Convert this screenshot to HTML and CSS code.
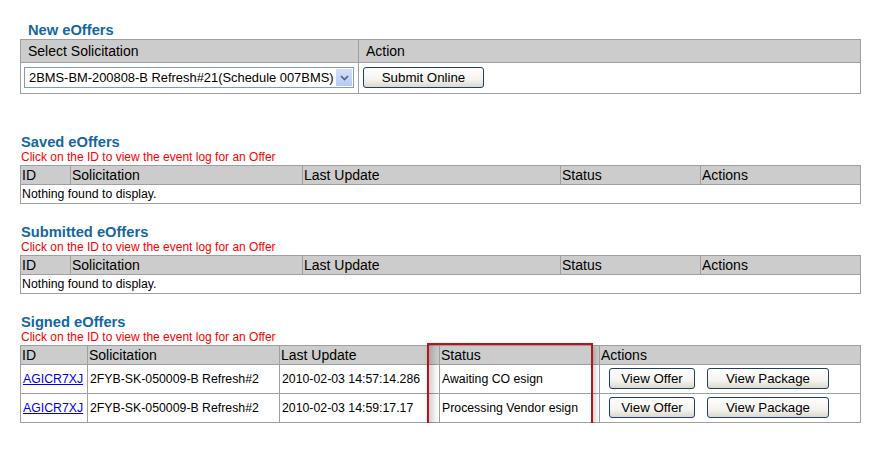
FILE: index.html
```html
<!DOCTYPE html>
<html>
<head>
<meta charset="utf-8">
<title>eOffers</title>
<link rel="stylesheet" href="styles.css">
</head>
<body>
<div class="page">
  <section class="block block-new">
    <h2 class="title title-new">New eOffers</h2>
    <table class="grid grid-new">
      <colgroup><col class="c-sel"><col></colgroup>
      <tr class="head"><th>Select Solicitation</th><th class="th-action">Action</th></tr>
      <tr class="row-new">
        <td class="td-select">
          <div class="select">
            <span class="select-text">2BMS-BM-200808-B Refresh#21(Schedule 007BMS)</span>
            <span class="select-arrow"><svg width="9" height="6" viewBox="0 0 9 6"><path d="M1 1 L4.5 4.5 L8 1" fill="none" stroke="#4d6185" stroke-width="1.6"/></svg></span>
          </div>
        </td>
        <td class="td-submit"><button class="btn btn-submit">Submit Online</button></td>
      </tr>
    </table>
  </section>

  <section class="block block-saved">
    <h2 class="title">Saved eOffers</h2>
    <p class="note">Click on the ID to view the event log for an Offer</p>
    <table class="grid grid-std">
      <colgroup><col class="s-id"><col class="s-sol"><col class="s-upd"><col class="s-st"><col></colgroup>
      <tr class="head"><th>ID</th><th>Solicitation</th><th>Last Update</th><th>Status</th><th>Actions</th></tr>
      <tr class="row-empty"><td colspan="5">Nothing found to display.</td></tr>
    </table>
  </section>

  <section class="block block-submitted">
    <h2 class="title">Submitted eOffers</h2>
    <p class="note">Click on the ID to view the event log for an Offer</p>
    <table class="grid grid-std">
      <colgroup><col class="s-id"><col class="s-sol"><col class="s-upd"><col class="s-st"><col></colgroup>
      <tr class="head"><th>ID</th><th>Solicitation</th><th>Last Update</th><th>Status</th><th>Actions</th></tr>
      <tr class="row-empty"><td colspan="5">Nothing found to display.</td></tr>
    </table>
  </section>

  <section class="block block-signed">
    <h2 class="title">Signed eOffers</h2>
    <p class="note">Click on the ID to view the event log for an Offer</p>
    <table class="grid grid-signed">
      <colgroup><col class="g-id"><col class="g-sol"><col class="g-upd"><col class="g-st"><col></colgroup>
      <tr class="head"><th>ID</th><th>Solicitation</th><th>Last Update</th><th>Status</th><th>Actions</th></tr>
      <tr class="row-data">
        <td><a href="#" class="link">AGICR7XJ</a></td>
        <td>2FYB-SK-050009-B Refresh#2</td>
        <td>2010-02-03 14:57:14.286</td>
        <td>Awaiting CO esign</td>
        <td class="td-actions"><button class="btn btn-offer">View Offer</button><button class="btn btn-package">View Package</button></td>
      </tr>
      <tr class="row-data">
        <td><a href="#" class="link">AGICR7XJ</a></td>
        <td>2FYB-SK-050009-B Refresh#2</td>
        <td>2010-02-03 14:59:17.17</td>
        <td>Processing Vendor esign</td>
        <td class="td-actions"><button class="btn btn-offer">View Offer</button><button class="btn btn-package">View Package</button></td>
      </tr>
    </table>
    <div class="highlight"></div>
  </section>
</div>
</body>
</html>
```

FILE: styles.css
```css
body {
  margin: 0;
  background: #ffffff;
  color: #000000;
  font-family: "Liberation Sans", Arial, sans-serif;
}

.page {
  padding: 22px 0 0 20px;
  width: 841px;
}

.block {
  position: relative;
}

.block-saved {
  margin-top: 40px;
}

.block-submitted,
.block-signed {
  margin-top: 20px;
}

.title {
  margin: 0;
  padding-left: 1px;
  font-size: 14.7px;
  line-height: 16px;
  font-weight: bold;
  color: #1467a0;
}

.title-new {
  padding-left: 8px;
  margin-bottom: 1px;
}

.note {
  margin: 0 0 1px 0;
  padding-left: 1px;
  font-size: 12px;
  line-height: 14px;
  color: #ff0000;
}

.grid {
  width: 841px;
  border-collapse: collapse;
  table-layout: fixed;
  border: 1px solid #a0a0a0;
}

.grid th,
.grid td {
  border: 1px solid #a0a0a0;
  text-align: left;
  white-space: nowrap;
  overflow: hidden;
}

.grid th {
  background: #cccccc;
  font-weight: normal;
  font-size: 14px;
  line-height: 16px;
  padding: 1px 1px;
}

.grid td {
  font-size: 12.3px;
  line-height: 16px;
  padding: 1px 1px;
  vertical-align: middle;
}

/* New eOffers table */
.c-sel { width: 338px; }

.grid-new th {
  padding: 3px 7px;
}

.td-select {
  padding: 4px 3px 5px 3px !important;
}

.td-submit {
  padding: 4px 4px 5px 4px !important;
}

.select {
  width: 330px;
  height: 21px;
  box-sizing: border-box;
  border: 1px solid #7f9db9;
  background: #fff;
  display: flex;
  align-items: center;
  justify-content: space-between;
}

.select-text {
  font-size: 12.9px;
  padding-left: 4px;
  line-height: 17px;
}

.select-arrow {
  width: 16px;
  height: 17px;
  margin-right: 1px;
  background: linear-gradient(#d3e0fd, #b6c9f6);
  display: flex;
  align-items: center;
  justify-content: center;
}

/* Buttons */
.btn {
  height: 21px;
  box-sizing: border-box;
  border: 1px solid #1f3e6e;
  border-radius: 3px;
  background: linear-gradient(#ffffff 0%, #f4f3ee 60%, #dcd9cd 100%);
  font-family: "Liberation Sans", Arial, sans-serif;
  font-size: 13.3px;
  line-height: 17px;
  color: #000;
  padding: 0;
  vertical-align: middle;
}

.btn-submit { width: 121px; }
.btn-offer { width: 86px; }
.btn-package { width: 122px; margin-left: 12px; }

/* Saved / Submitted */
.s-id { width: 50px; }
.s-sol { width: 232px; }
.s-upd { width: 258px; }
.s-st { width: 140px; }

/* Signed */
.g-id { width: 67px; }
.g-sol { width: 192px; }
.g-upd { width: 160px; }
.g-st { width: 160px; }

.row-data td {
  padding: 3px 1px 4px 2px;
}

.td-actions {
  padding-left: 9px !important;
}

.link {
  color: #0000ee;
  text-decoration: underline;
}

.highlight {
  position: absolute;
  left: 407px;
  top: 29px;
  width: 166px;
  height: 83px;
  box-sizing: border-box;
  border: 2px solid #b3151c;
  box-shadow: inset 8px 0 7px -4px rgba(0, 0, 0, 0.2), 2px 3px 5px rgba(0, 0, 0, 0.22);
  pointer-events: none;
}
```
